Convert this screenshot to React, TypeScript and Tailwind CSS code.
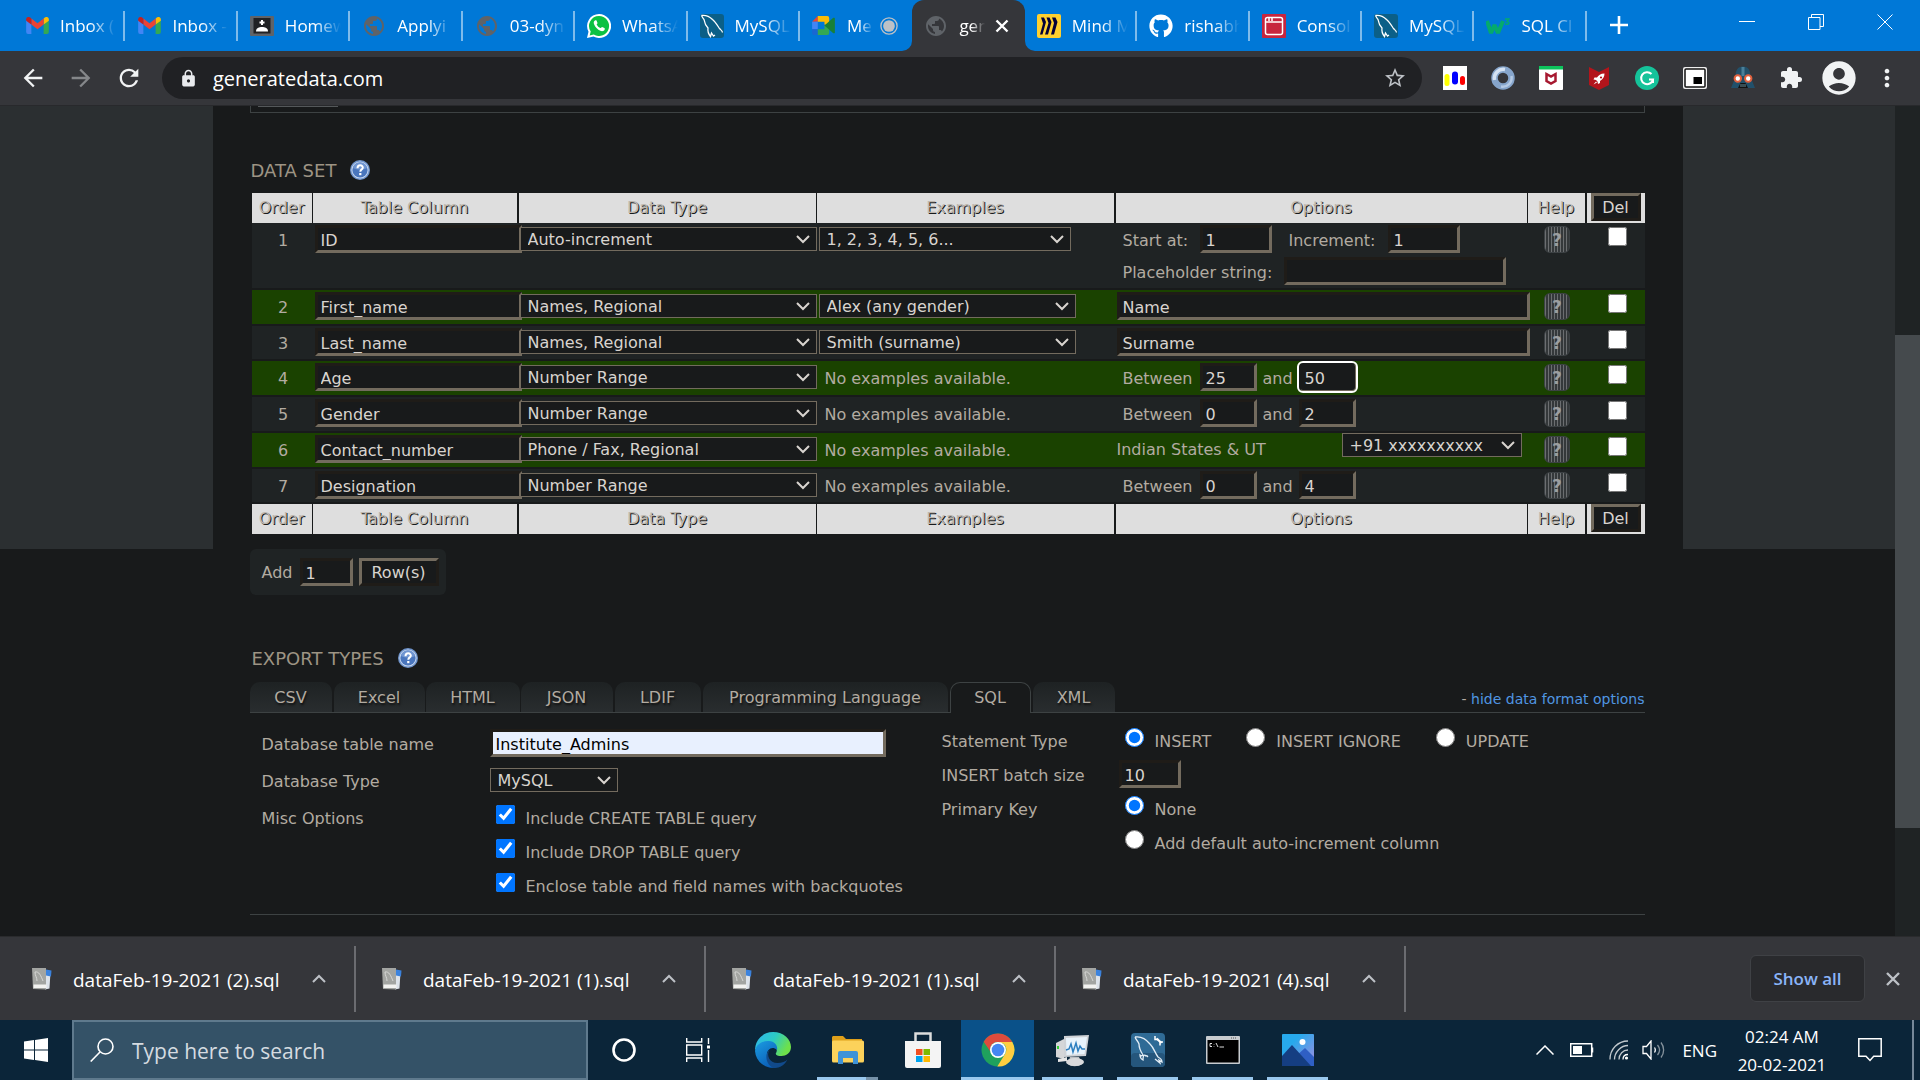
import React from "react";
import {
  MdAccountCircle,
  MdArrowBack,
  MdArrowForward,
  MdExtension,
  MdLock,
  MdMoreVert,
  MdPublic,
  MdRefresh,
  MdStarBorder,
} from "react-icons/md";
import { FaGithub } from "react-icons/fa";

/* ---------- small drawings ---------- */

function Gmail() {
  return (
    <svg viewBox="0 0 24 18" className="h-[17px] w-[23px]">
      <path d="M0 3v13a2 2 0 0 0 2 2h3.500V8z" fill="#4285f4" />
      <path d="M24 3v13a2 2 0 0 1-2 2h-3.500V8z" fill="#34a853" />
      <path d="M18.500 1.800V8L24 4V2.500C24 .2 21.400-.8 19.700.6z" fill="#fbbc04" />
      <path d="M5.500 8V1.500L12 6.500l6.500-5V8L12 13z" fill="#ea4335" />
      <path d="M0 2.500V4l5.500 4V1.800L4.300.6C2.500-.8 0 .2 0 2.500z" fill="#c5221f" />
    </svg>
  );
}

function Classroom() {
  return (
    <svg viewBox="0 0 24 24" className="size-6">
      <rect y="2" width="24" height="20" rx="1" fill="#5f6368" />
      <rect x="3.500" y="4" width="17" height="15.500" fill="#202124" />
      <path d="M12 6v5M9.500 8.500h5" stroke="#fff" strokeWidth="2" />
      <path d="M6 17.500c0-3.500 3-4.500 6-4.500s6 1 6 4.500z" fill="#fff" />
    </svg>
  );
}

function Globe() {
  return <MdPublic className="size-6 text-[#5f6368]" />;
}

function WhatsApp() {
  return (
    <svg viewBox="0 0 24 24" className="size-6">
      <path d="M12 0a12 12 0 1 1-5.500 22.600L0 24l1.500-6.300A12 12 0 0 1 12 0z" fill="#fff" />
      <path d="M12 2a10 10 0 1 1-5.200 18.500L2.700 21.500l1-4A10 10 0 0 1 12 2z" fill="#0cc143" />
      <path
        d="M8.300 6.300c-1.600.6-2 2.600-1 4.500 1.300 2.700 3.300 4.700 6 6 2 .8 3.900.2 4.400-1.300.2-.7.100-1.200-.3-1.400l-2.300-1.200c-.5-.1-1 .9-1.500 1.200-1.700-.5-3.300-2-4-3.800.4-.4 1-.9.9-1.400L9.600 6.700c-.3-.5-.7-.6-1.300-.4z"
        fill="#fff"
      />
    </svg>
  );
}

function Dolphin() {
  return (
    <svg viewBox="0 0 24 24" className="size-6">
      <rect width="24" height="24" rx="3" fill="#0b5f87" />
      <path
        d="M1.500 1.500c4-.5 8 1 11 4 3 2.500 5 6 7 9 1.500 1.500 3 2.500 3 4M1.500 1.500c1 2 1.500 3 2.500 4 .5 3 1.500 6 4 8.500-.5 3 .5 6 2.500 8.500l1-3.500 2 3 1.500-1"
        fill="none"
        stroke="#fff"
        strokeWidth="1.300"
      />
    </svg>
  );
}

function Meet() {
  return (
    <svg viewBox="0 0 24 20" className="h-[19px] w-[23px]">
      <path d="M6 0v6H0z" fill="#ea4335" />
      <path d="M0 6h6v8H0z" fill="#4285f4" />
      <path d="M0 14h6v6H2a2 2 0 0 1-2-2z" fill="#1967d2" />
      <path d="M6 0h10a2 2 0 0 1 2 2v8l-5-1V6H6z" fill="#fbbc04" />
      <path d="M6 20h10a2 2 0 0 0 2-2v-8h-5v4H6z" fill="#34a853" />
      <path d="M13 10l9-8c.8-.6 2-.2 2 1v14c0 1.200-1.200 1.600-2 1z" fill="#188038" />
    </svg>
  );
}

function Miro() {
  return (
    <svg viewBox="0 0 24 24" className="size-6">
      <rect width="24" height="24" rx="2" fill="#ffd02f" />
      <path d="M4 3.500h3l2 4.500-3.500 12.500H3L6 9.500zM9.500 3.500h3l2 4.500L11 20.500H8l3.500-11.500zM15 3.500h3.500L20.500 8 17 20.500h-3L17 9z" fill="#050038" />
    </svg>
  );
}

function ConsoleIcon() {
  return (
    <svg viewBox="0 0 24 24" className="size-6">
      <rect width="24" height="24" rx="1" fill="#c7253e" />
      <rect x="3.500" y="3.500" width="17" height="17" rx="2" fill="none" stroke="#fff" strokeWidth="1.500" />
      <path d="M4 8h16M7 4v3M10 4v3" stroke="#fff" strokeWidth="1.500" />
    </svg>
  );
}

function W3() {
  return (
    <svg viewBox="0 0 24 24" className="size-6">
      <path d="M1 7l4 12 3.500-8 3.500 8 5-12" fill="none" stroke="#04aa6d" strokeWidth="4" strokeLinejoin="bevel" />
      <path d="M19 5h4l-2 2.500c3 0 2.500 4-1.800 2.500" fill="none" stroke="#04aa6d" strokeWidth="1.400" />
    </svg>
  );
}

function HelpBall() {
  return (
    <svg viewBox="0 0 20 20" className="size-5" aria-hidden="true">
      <circle cx="10" cy="10" r="10" fill="#6f94cc" />
      <circle cx="10" cy="10" r="8.600" fill="#c9d8ee" />
      <circle cx="10" cy="10" r="7.600" fill="#4a76bd" />
      <path d="M3 8a7.200 7.200 0 0 1 14 0c-4 2-9 2-14 0z" fill="#7096d2" />
      <path d="M7.500 8.200c0-3.800 5.500-3.600 5.300-.5-.1 1.700-2.500 1.800-2.500 4" fill="none" stroke="#fff" strokeWidth="2" />
      <rect x="9.200" y="13" width="2.200" height="2.200" fill="#fff" />
    </svg>
  );
}

function Chevron({ className }: { className: string }) {
  return (
    <svg viewBox="0 0 14 9" className={className} aria-hidden="true">
      <path d="M1 1l6 6 6-6" fill="none" stroke="currentColor" strokeWidth="2" />
    </svg>
  );
}

/* ---------- browser chrome ---------- */

const tabs = [
  { title: "Inbox (", icon: <Gmail /> },
  { title: "Inbox -", icon: <Gmail /> },
  { title: "Homew", icon: <Classroom /> },
  { title: "Applyi", icon: <Globe /> },
  { title: "03-dyn", icon: <Globe /> },
  { title: "WhatsA", icon: <WhatsApp /> },
  { title: "MySQL", icon: <Dolphin /> },
  { title: "Me", icon: <Meet />, recording: true },
  { title: "gen", icon: <Globe />, active: true },
  { title: "Mind M", icon: <Miro /> },
  { title: "rishabh", icon: <FaGithub className="size-6 text-white" /> },
  { title: "Consol", icon: <ConsoleIcon /> },
  { title: "MySQL", icon: <Dolphin /> },
  { title: "SQL Cl", icon: <W3 /> },
];

function TabStrip() {
  return (
    <header className="grid h-[51px] shrink-0 grid-cols-[1587fr_333fr] bg-[#0078d7] text-white">
      <div className="flex min-w-0 pl-[13px]" role="tablist">
        {tabs.map((t, i) => (
          <div
            key={i}
            role="tab"
            aria-selected={!!t.active}
            className={
              t.active
                ? "relative flex min-w-0 flex-1 items-center rounded-t-xl bg-[#35363a] pl-3"
                : "flex min-w-0 flex-1 items-center pl-3"
            }
          >
            {t.active && (
              <svg viewBox="0 0 10 10" className="absolute bottom-0 -left-[10px] size-[10px]">
                <path d="M10 0v10H0A10 10 0 0 0 10 0z" fill="#35363a" />
              </svg>
            )}
            <span className="flex w-6 shrink-0 justify-center">{t.icon}</span>
            <span
              className={
                t.active || t.recording
                  ? "ml-[11px] min-w-0 flex-1 text-[17px] leading-6 whitespace-nowrap [mask-image:linear-gradient(to_right,black_12px,transparent_26px)]"
                  : "ml-[11px] min-w-0 flex-1 text-[17px] leading-6 whitespace-nowrap [mask-image:linear-gradient(to_right,black_30px,transparent_56px)]"
              }
            >
              {t.title}
            </span>
            {t.recording && (
              <svg viewBox="0 0 20 20" className="mr-[14px] ml-1 size-[18px] shrink-0">
                <circle cx="10" cy="10" r="9" fill="none" stroke="#bdc1c6" strokeWidth="1.500" />
                <circle cx="10" cy="10" r="6.500" fill="#bdc1c6" />
              </svg>
            )}
            {t.active && (
              <button aria-label="Close tab" className="mr-4 ml-1 shrink-0">
                <svg viewBox="0 0 14 14" className="size-[14px]">
                  <path d="M1.500 1.500l11 11M12.500 1.500l-11 11" stroke="#fff" strokeWidth="2.400" />
                </svg>
              </button>
            )}
            {t.active && (
              <svg viewBox="0 0 10 10" className="absolute -right-[10px] bottom-0 size-[10px]">
                <path d="M0 0v10h10A10 10 0 0 1 0 0z" fill="#35363a" />
              </svg>
            )}
            {!t.active && !t.recording && <span className="h-[30px] w-[2px] shrink-0 bg-[#7fbbeb]" />}
          </div>
        ))}
      </div>
      <div className="flex items-start justify-between pr-[27px] pl-[23px]">
        <button aria-label="New tab" className="mt-4">
          <svg viewBox="0 0 18 18" className="size-[18px]">
            <path d="M9 0v18M0 9h18" stroke="#fff" strokeWidth="2.600" />
          </svg>
        </button>
        <div className="mt-[14px] flex gap-[53px]">
          <button aria-label="Minimize">
            <svg viewBox="0 0 16 16" className="size-4">
              <path d="M0 7.500h16" stroke="#fff" />
            </svg>
          </button>
          <button aria-label="Restore">
            <svg viewBox="0 0 16 16" className="size-4" fill="none" stroke="#fff">
              <path d="M.5 3.500h11.500v12H.5zM3.500 3.500v-3h12v12H12" />
            </svg>
          </button>
          <button aria-label="Close">
            <svg viewBox="0 0 16 16" className="size-4">
              <path d="M.5.5l15 15M15.500.5l-15 15" stroke="#fff" />
            </svg>
          </button>
        </div>
      </div>
    </header>
  );
}

function Extensions() {
  return (
    <div className="flex items-center gap-6">
      <svg viewBox="0 0 24 24" className="size-6">
        <rect width="24" height="24" fill="#fff" />
        <path d="M4 10.500v7" stroke="#ff0" strokeWidth="5" strokeLinecap="round" />
        <path d="M12 8.500v7" stroke="#00f" strokeWidth="6" strokeLinecap="round" />
        <path d="M19.500 12.500v4" stroke="#f00" strokeWidth="5" strokeLinecap="round" />
      </svg>
      <svg viewBox="0 0 24 24" className="size-6">
        <circle cx="12" cy="12" r="8.500" fill="none" stroke="#86a5cb" strokeWidth="6.500" />
        <path d="M3.500 14A9 9 0 0 1 14 3.500" fill="none" stroke="#d5e2f2" strokeWidth="3.500" />
        <path d="M20.500 10A9 9 0 0 1 10 20.500" fill="none" stroke="#b5cae4" strokeWidth="2.500" />
      </svg>
      <svg viewBox="0 0 24 24" className="size-6">
        <rect width="24" height="24" rx="1" fill="#fff" />
        <rect width="24" height="3.500" fill="#0cc45c" />
        <path d="M7.500 8l4.500 2.500L16.500 8v7L12 17.500 7.500 15z" fill="none" stroke="#a71930" strokeWidth="2.500" />
      </svg>
      <svg viewBox="0 0 24 24" className="size-6">
        <path d="M2 1l10 5 10-5v18l-10 5-10-5z" fill="#b3141b" />
        <path d="M17.500 7.500c-4 0-6 2-7.500 4H7.500l-1 2 2.500.5 1.500 1.500.5 2.500 2-1V15c3-1.500 4.500-4.500 4.500-7.500zM9 15.500L6.500 18.500 10 16.500z" fill="#fff" />
        <circle cx="14" cy="11.500" r="1.100" fill="#b3141b" />
      </svg>
      <svg viewBox="0 0 24 24" className="size-6">
        <circle cx="12" cy="12" r="12" fill="#15c39a" />
        <path d="M16.500 8a6 6 0 1 0 1.500 5.500h-4M18 13.500V17" fill="none" stroke="#fff" strokeWidth="2" />
      </svg>
      <svg viewBox="0 0 24 24" className="size-6">
        <rect x="0" y="1" width="24" height="22" rx="2" fill="#eee" />
        <rect x="2" y="3" width="20" height="18" rx="1" fill="#fff" stroke="#111" strokeWidth="1.500" />
        <rect x="10.500" y="11" width="8.500" height="7" fill="#000" />
      </svg>
      <svg viewBox="0 0 24 24" className="size-6">
        <path d="M12 0.500c5.500 0 7.500 4 7.500 10.500L24 22H0l4.500-11C4.500 4.500 6.500.5 12 .5z" fill="#22506a" />
        <path d="M12 1v9" stroke="#4a7f98" strokeWidth="3" />
        <circle cx="6.800" cy="12.500" r="3.200" fill="#fff" stroke="#e2603c" strokeWidth="2" />
        <circle cx="17.200" cy="12.500" r="3.200" fill="#fff" stroke="#e2603c" strokeWidth="2" />
        <path d="M7 22l2.500-5h5l2.500 5z" fill="#111" />
        <path d="M10 18v3M12 18v3M14 18v3" stroke="#7ab" strokeWidth=".8" />
      </svg>
      <MdExtension className="size-6 text-[#f1f3f4]" />
    </div>
  );
}

function Toolbar() {
  return (
    <nav className="flex h-[55px] shrink-0 items-center border-b border-[#28292c] bg-[#35363a] pr-[19px] pl-[19px] text-[#f1f3f4]">
      <button aria-label="Back">
        <MdArrowBack className="size-7" />
      </button>
      <button aria-label="Forward" className="ml-5 text-[#85878a]">
        <MdArrowForward className="size-7" />
      </button>
      <button aria-label="Reload" className="ml-5">
        <MdRefresh className="size-7" />
      </button>
      <div className="ml-[19px] flex h-[42px] flex-1 items-center rounded-full bg-[#202124] pr-[15px] pl-[17px]">
        <MdLock className="size-[19px] text-[#e8eaed]" />
        <input
          aria-label="Address"
          defaultValue="generatedata.com"
          className="ml-[15px] min-w-0 flex-1 bg-transparent pt-[2px] text-[20px] text-white outline-none"
        />
        <MdStarBorder className="size-6 text-[#bdc1c6]" />
      </div>
      <div className="ml-[21px] flex items-center">
        <Extensions />
        <button aria-label="Profile" className="ml-4">
          <MdAccountCircle className="size-10" />
        </button>
        <button aria-label="Menu" className="ml-[14px]">
          <MdMoreVert className="size-7" />
        </button>
      </div>
    </nav>
  );
}

/* ---------- form controls ---------- */

const sunken =
  "h-7 rounded-none border-[3px] border-t-[#1f1c18] border-r-[#736b5e] border-b-[#736b5e] border-l-[#1f1c18] bg-[#181a1b] pt-[2px] pl-[3px] leading-5 text-[#d8d4cf] outline-none";

function Field({ value, label, width }: { value: string; label: string; width: string }) {
  return <input aria-label={label} defaultValue={value} className={`${sunken} shrink-0 ${width}`} />;
}

function Picker({ value, label, width }: { value: string; label: string; width: string }) {
  return (
    <span className={`relative block h-6 shrink-0 ${width}`}>
      <select
        aria-label={label}
        className="block h-6 w-full appearance-none rounded-none border border-[#736b5e] bg-[#181a1b] pt-[2px] pl-[7px] leading-5 text-[#d8d4cf]"
      >
        <option>{value}</option>
      </select>
      <Chevron className="pointer-events-none absolute top-2 right-[7px] h-[9px] w-[14px] text-[#d8d4cf]" />
    </span>
  );
}

const raised =
  "h-7 border-[3px] border-t-[#736b5e] border-r-[#1f1c18] border-b-[#1f1c18] border-l-[#736b5e] bg-[#181a1b] leading-6 text-[#d8d4cf]";

/* ---------- data set table ---------- */

function Range({ from, to, focused }: { from: string; to: string; focused?: boolean }) {
  return (
    <div className="flex pl-[7px] leading-[31px]">
      <span className="w-[77px]">Between</span>
      <Field label="From" value={from} width="w-[57px]" />
      <span className="w-[42px] pl-[6px]">and</span>
      {focused ? (
        <input
          aria-label="To"
          defaultValue={to}
          className="h-7 w-[57px] rounded-sm border border-[#181a1b] border-r-[#736b5e] border-b-[#736b5e] bg-[#181a1b] pt-[2px] pl-[5px] leading-6 text-[#d8d4cf] outline-2 outline-white"
        />
      ) : (
        <Field label="To" value={to} width="w-[57px]" />
      )}
    </div>
  );
}

const rows = [
  {
    name: "ID",
    type: "Auto-increment",
    example: "1, 2, 3, 4, 5, 6...",
    exampleWidth: "w-[252px]",
    options: (
      <div className="pl-[7px] leading-[31px]">
        <div className="flex h-8">
          <span className="w-[77px]">Start at:</span>
          <Field label="Start at" value="1" width="w-[72px]" />
          <span className="w-[116px] pl-[17px]">Increment:</span>
          <Field label="Increment" value="1" width="w-[72px]" />
        </div>
        <div className="flex">
          <span className="w-[161px]">Placeholder string:</span>
          <Field label="Placeholder string" value="" width="w-[222px]" />
        </div>
      </div>
    ),
  },
  {
    name: "First_name",
    type: "Names, Regional",
    example: "Alex (any gender)",
    exampleWidth: "w-[257px]",
    options: <div className="flex pl-px"><Field label="Options" value="Name" width="w-[413px]" /></div>,
  },
  {
    name: "Last_name",
    type: "Names, Regional",
    example: "Smith (surname)",
    exampleWidth: "w-[257px]",
    options: <div className="flex pl-px"><Field label="Options" value="Surname" width="w-[413px]" /></div>,
  },
  { name: "Age", type: "Number Range", options: <Range from="25" to="50" focused /> },
  { name: "Gender", type: "Number Range", options: <Range from="0" to="2" /> },
  {
    name: "Contact_number",
    type: "Phone / Fax, Regional",
    options: (
      <div className="flex justify-between pr-[6px] pl-px">
        <span className="leading-[34px]">Indian States &amp; UT</span>
        <Picker label="Phone format" value="+91 xxxxxxxxxx" width="w-[180px]" />
      </div>
    ),
  },
  { name: "Designation", type: "Number Range", options: <Range from="0" to="4" /> },
];

function HeadCells() {
  const th =
    "border-r border-[#181a1b] bg-[#dedede] p-0 font-normal text-[#bdb7af] [text-shadow:1px_1px_0_#181a1b]";
  return (
    <tr className="h-[30px]">
      <th className={th}>Order</th>
      <th className={`${th} border-r-2`}>Table Column</th>
      <th className={th}>Data Type</th>
      <th className={`${th} border-r-2`}>Examples</th>
      <th className={th}>Options</th>
      <th className={`${th} border-r-2`}>Help</th>
      <th className="bg-[#dedede] p-0 align-top font-normal">
        <button className={`${raised} block ml-1 w-[50px]`}>Del</button>
      </th>
    </tr>
  );
}

function DataTable() {
  return (
    <table className="mt-[10px] ml-[2px] w-[calc(100%-2px)] table-fixed border-separate border-spacing-0">
      <colgroup>
        <col className="w-[61px]" />
        <col className="w-[206px]" />
        <col className="w-[298px]" />
        <col className="w-[299px]" />
        <col />
        <col className="w-[59px]" />
        <col className="w-[58px]" />
      </colgroup>
      <thead>
        <HeadCells />
      </thead>
      <tbody>
        {rows.map((r, i) => {
          const td = "border-b-2 border-[#181a1b] p-0 align-top";
          const tint = i % 2 ? "bg-[#1a4200]" : "bg-[#1f2324]";
          const height = i === 0 ? "h-[67px]" : i === 2 || i === 6 ? "h-[35px]" : "h-9";
          return (
            <tr key={r.name} className={`${tint} ${height}`}>
              <td className={`${td} pt-[2px] pl-[2px] text-center leading-[31px]`}>{i + 1}</td>
              <td className={`${td} pt-[2px]`}>
                <div className="flex pl-[2px]">
                  <Field label="Table column" value={r.name} width="w-[207px]" />
                </div>
              </td>
              <td className={`${td} pt-1`}>
                <div className="pl-px">
                  <Picker label="Data type" value={r.type} width="w-[297px]" />
                </div>
              </td>
              <td className={`${td} pt-1`}>
                {r.example ? (
                  <div className="pl-[2px]">
                    <Picker label="Example" value={r.example} width={r.exampleWidth!} />
                  </div>
                ) : (
                  <div className="pl-2 leading-[27px]">No examples available.</div>
                )}
              </td>
              <td className={i === 5 ? td : `${td} pt-[2px]`}>{r.options}</td>
              <td className={`${td} pt-[3px]`}>
                <button
                  aria-label="Help"
                  className="ml-4 block h-[27px] w-[26px] rounded-md border border-[#3c4144] bg-[repeating-linear-gradient(90deg,#6b6e70_0_1px,#34383a_1px_3px)] pl-px text-[17px] leading-6 font-bold text-[#9b9ea0]"
                >
                  ?
                </button>
              </td>
              <td className={`${td} pt-1`}>
                <input type="checkbox" aria-label="Delete row" className="ml-[21px] block size-[19px] accent-[#0075ff]" />
              </td>
            </tr>
          );
        })}
      </tbody>
      <tfoot>
        <HeadCells />
      </tfoot>
    </table>
  );
}

/* ---------- export options ---------- */

const exportTabs = [
  ["CSV", "w-[82px] mr-[2px]"],
  ["Excel", "w-[91px] mr-px"],
  ["HTML", "w-[94px] mr-px"],
  ["JSON", "w-[92px] mr-[2px]"],
  ["LDIF", "w-[86px] mr-[2px]"],
  ["Programming Language", "w-[245px] mr-[2px]"],
  ["SQL", "w-[81px] mr-[2px]"],
  ["XML", "w-[82px]"],
];

function Tick({ children }: { children: React.ReactNode }) {
  return (
    <label className="flex h-[34px] leading-9">
      <input type="checkbox" defaultChecked className="mt-1 mr-[11px] ml-[6px] size-[19px] accent-[#0075ff]" />
      {children}
    </label>
  );
}

function Radio({ name, checked, children }: { name: string; checked?: boolean; children: React.ReactNode }) {
  return (
    <label className="flex h-[34px] leading-9">
      <input type="radio" name={name} defaultChecked={checked} className="mt-1 mr-[11px] size-[19px] accent-[#0075ff]" />
      {children}
    </label>
  );
}

function ExportOptions() {
  return (
    <section className="border-b border-[#3d4243] pb-[11px]">
      <div className="flex items-end border-b border-[#3d4243]">
        {exportTabs.map(([name, size]) => (
          <button
            key={name}
            className={
              name === "SQL"
                ? `${size} -mb-px h-[31px] rounded-t-[10px] border border-b-0 border-[#3d4243] bg-[#181a1b]`
                : `${size} h-[30px] rounded-t-[10px] bg-gradient-to-b from-[#1e2223] to-[#292d2f] pt-[2px] [text-shadow:1px_2px_2px_#111]`
            }
          >
            {name}
          </button>
        ))}
        <div className="ml-auto self-center pt-1 text-[14px]">
          -{" "}
          <a href="#options" className="text-[#5096e2]">
            hide data format options
          </a>
        </div>
      </div>
      <div className="flex pt-[11px] pl-3">
        <div className="w-[680px] pt-[5px]">
          <div className="flex h-[37px] leading-8">
            <label htmlFor="table-name" className="w-[228px]">
              Database table name
            </label>
            <input
              id="table-name"
              defaultValue="Institute_Admins"
              className="h-7 w-[396px] border-[3px] border-t-[#1f1c18] border-r-[#736b5e] border-b-[#736b5e] border-l-[#1f1c18] bg-[#e8f0fe] pt-[2px] pl-[3px] leading-5 text-black"
            />
          </div>
          <div className="flex h-[35px] leading-8">
            <span className="w-[228px]">Database Type</span>
            <div className="pt-[2px]">
              <Picker label="Database type" value="MySQL" width="w-[128px]" />
            </div>
          </div>
          <div className="flex leading-9">
            <span className="w-[228px]">Misc Options</span>
            <div>
              <Tick>Include CREATE TABLE query</Tick>
              <Tick>Include DROP TABLE query</Tick>
              <Tick>Enclose table and field names with backquotes</Tick>
            </div>
          </div>
        </div>
        <div className="leading-9">
          <div className="flex h-[34px]">
            <span className="w-[183px]">Statement Type</span>
            <div className="flex gap-[35px]">
              <Radio name="statement" checked>INSERT</Radio>
              <Radio name="statement">INSERT IGNORE</Radio>
              <Radio name="statement">UPDATE</Radio>
            </div>
          </div>
          <div className="flex h-[34px]">
            <span className="w-[177px]">INSERT batch size</span>
            <div className="flex pt-[2px]">
              <Field label="INSERT batch size" value="10" width="w-[62px]" />
            </div>
          </div>
          <div className="flex">
            <span className="w-[183px]">Primary Key</span>
            <div>
              <Radio name="key" checked>None</Radio>
              <Radio name="key">Add default auto-increment column</Radio>
            </div>
          </div>
        </div>
      </div>
    </section>
  );
}

function Page() {
  return (
    <main className="flex min-h-0 flex-1 overflow-hidden bg-[#181a1b] font-['DejaVu_Sans',Verdana,sans-serif] text-[16px] text-[#b2aba1]">
      <div className="h-[443px] flex-1 bg-[#2b2f31]" />
      <div className="w-full max-w-[1470px] pr-[38px] pl-[37px]">
        <div className="h-[7px] border border-t-0 border-[#3d4243] pl-[7px]">
          <div className="h-px w-20 bg-[#54585a]" />
        </div>
        <h2 className="mt-11 flex h-[26px] items-center gap-[14px] pl-px text-[18px] text-[#9d9484]">
          DATA SET <HelpBall />
        </h2>
        <DataTable />
        <div className="mt-[15px] flex h-[46px] w-[196px] items-center rounded-md bg-[#1f2324] pl-3">
          <label htmlFor="add-rows" className="w-[38px] pt-px">
            Add
          </label>
          <input id="add-rows" defaultValue="1" className={`${sunken} w-[53px]`} />
          <button className={`${raised} ml-[6px] w-20`}>Row(s)</button>
        </div>
        <h2 className="mt-[50px] mb-[11px] flex h-[26px] items-center gap-[14px] pl-[2px] text-[18px] text-[#9d9484]">
          EXPORT TYPES <HelpBall />
        </h2>
        <ExportOptions />
      </div>
      <div className="h-[443px] flex-1 bg-[#2b2f31]" />
      <div className="w-[25px] shrink-0 bg-[#1f2324] pt-[229px]">
        <div className="h-[493px] bg-[#454a4d]" />
      </div>
    </main>
  );
}

/* ---------- downloads and taskbar ---------- */

function SqlFile() {
  return (
    <svg viewBox="0 0 20 24" className="h-6 w-5">
      <path d="M13 4l5.500 1-1 16.500-4.500 1z" fill="#dde3ea" />
      <path d="M14 2.500l5.500 1-.5 6-5-1z" fill="#3b82dd" />
      <path d="M0 1h14v21.500L1 22z" fill="#a3a5a2" />
      <path d="M3 5c4-1 6 4 8 9M3 5c0 4 2 5 2 9" fill="none" stroke="#d7d8d6" />
      <path d="M1.500 17.500h13v3.500h-13z" fill="#f2f2f0" />
    </svg>
  );
}

const downloads = ["(2)", "(1)", "(1)", "(4)"];

function DownloadBar() {
  return (
    <section className="flex h-[84px] shrink-0 items-center border-t border-[#2a2b2d] bg-[#35363a] pl-[6px]">
      {downloads.map((n, i) => (
        <div key={i} className="flex h-[66px] w-[350px] items-center border-r-2 border-[#6b6c70] pl-[26px]">
          <SqlFile />
          <span className="ml-[21px] flex-1 pt-[3px] text-[19px] whitespace-nowrap text-white">dataFeb-19-2021 {n}.sql</span>
          <button aria-label="Download options" className="mr-7 ml-3">
            <Chevron className="h-[9px] w-[14px] rotate-180 text-[#bdc1c6]" />
          </button>
        </div>
      ))}
      <button className="ml-auto h-[47px] w-[115px] rounded-md border border-[#3f4145] bg-[#292a2d] text-[17px] font-semibold text-[#8ab4f8]">
        Show all
      </button>
      <button aria-label="Close downloads" className="mr-5 ml-[21px]">
        <svg viewBox="0 0 14 14" className="size-[14px]">
          <path d="M1 1l12 12M13 1L1 13" stroke="#bdc1c6" strokeWidth="2.400" />
        </svg>
      </button>
    </section>
  );
}

function Edge() {
  return (
    <svg viewBox="0 0 36 36" className="size-9">
      <defs>
        <linearGradient id="edge-a" x1="0" y1="0" x2="1" y2=".4">
          <stop offset="0" stopColor="#2fb4ef" />
          <stop offset=".55" stopColor="#2ccbc4" />
          <stop offset="1" stopColor="#6ee04a" />
        </linearGradient>
        <linearGradient id="edge-b" x1="0" y1="0" x2=".6" y2="1">
          <stop offset="0" stopColor="#1b9de2" />
          <stop offset="1" stopColor="#0b5fb8" />
        </linearGradient>
      </defs>
      <path d="M0 18A18 18 0 0 1 18 0c11 0 18 7.500 18 15 0 6-5 9-9.500 9-4 0-6.500-1.500-5.500-3 1.500-2 1.500-9-6-9-6 0-12 2-15 6z" fill="url(#edge-a)" />
      <path d="M0 19C1 12 8 8.500 14 9c6 .5 9 4.500 8 9-5-5-11 0-10 6 .8 5 5 9.500 10 11.300A18 18 0 0 1 0 19z" fill="url(#edge-b)" />
      <path d="M14.500 18c-3.500 5 0 13 8 13 4.500 0 8-1.500 10-3.500C30 32.500 25 36 19.500 36 12 34.500 8.500 23 14.500 18z" fill="#114a8b" />
    </svg>
  );
}

function Folder() {
  return (
    <svg viewBox="0 0 32 28" className="h-7 w-8">
      <path d="M0 1.500C0 .7.700 0 1.500 0H11l3 3h16v6H0z" fill="#dfa01a" />
      <rect y="4.500" width="32" height="22" rx="1.500" fill="#fcd25b" />
      <path d="M6 28V17a2 2 0 0 1 2-2h16a2 2 0 0 1 2 2v11h-5v-6H11v6z" fill="#3f93d8" />
    </svg>
  );
}

function Store() {
  return (
    <svg viewBox="0 0 36 36" className="size-9">
      <path d="M10.500 12V1.500h15V12" fill="none" stroke="#ddd" strokeWidth="2.500" />
      <path d="M0 9h36v25a2 2 0 0 1-2 2H2a2 2 0 0 1-2-2z" fill="#f4f4f4" />
      <path d="M11 17h6.500v6H11z" fill="#f25022" />
      <path d="M18.500 17H25v6h-6.500z" fill="#7fba00" />
      <path d="M11 24h6.500v6H11z" fill="#00a4ef" />
      <path d="M18.500 24H25v6h-6.500z" fill="#ffb900" />
    </svg>
  );
}

function Chrome() {
  return (
    <svg viewBox="0 0 34 34" className="size-[34px]">
      <circle cx="17" cy="17" r="16.500" fill="#1fa15d" />
      <path d="M2.700 8.700A16.500 16.500 0 0 1 31.300 9H17a8 8 0 0 0-7.500 5L9 18z" fill="#de4b3d" />
      <path d="M17 9h14.300a16.500 16.500 0 0 1-15 24.500L24 21a8 8 0 0 0-1-10z" fill="#ffcd41" />
      <circle cx="17" cy="17" r="8" fill="#fff" />
      <circle cx="17" cy="17" r="6.300" fill="#4587f3" />
    </svg>
  );
}

function Monitor() {
  return (
    <svg viewBox="0 0 36 34" className="h-[34px] w-9">
      <path d="M1 10l8-4v20l-8-2z" fill="#d5d6d8" />
      <path d="M2 13h2v3H2z" fill="#3c3" />
      <path d="M9 3l25-1-3 21-22 1z" fill="#cfd2d6" />
      <path d="M11 5l21-1-2.500 17-18 1z" fill="#e9f3fb" />
      <path d="M11 17l3-1 2-5 2 8 3-9 2 8 2-5 2 3h3" fill="none" stroke="#2d7fc0" strokeWidth="1.500" />
      <path d="M15 24h9l3 7c-4 3-11 3-14 0z" fill="#b9bcc0" />
      <ellipse cx="20" cy="29" rx="9" ry="4" fill="#d9dadc" />
      <path d="M3 26l9-2v4l-9 1z" fill="#e6e6e6" />
    </svg>
  );
}

function Workbench() {
  return (
    <svg viewBox="0 0 34 34" className="size-[34px]">
      <rect width="34" height="34" rx="4" fill="#2f6b96" />
      <rect y="20" width="34" height="14" rx="4" fill="#25567c" />
      <path
        d="M4 4c6-1 11 2 15 7 4 4 5 9 8 13 2 1 4 3 4 5l-3-2 1 3-5-4M4 4c1 3 3 4 4 7 0 5 2 8 4 11-1 1-2 1-3 0 0 3 1 4 3 5 0-4 1-6 3-4 1-1 1 0 2 1"
        fill="none"
        stroke="#e4eef6"
        strokeWidth="1.300"
      />
      <path d="M25.500 5.500l5 4.500" stroke="#fff" strokeWidth="2.200" />
      <path d="M24 3v3.500h3.500M29 12.500V9h3" fill="none" stroke="#fff" strokeWidth="1.500" />
    </svg>
  );
}

function Cmd() {
  return (
    <svg viewBox="0 0 34 28" className="h-7 w-[34px]">
      <rect width="34" height="28" rx="1" fill="#c8ccd0" />
      <rect x="1.500" y="4" width="31" height="22.500" fill="#000" />
      <path d="M6 7.500H4v3h2M8 8v.5M8 10v.5M10 7l2 4M13.500 11H18" fill="none" stroke="#ddd" />
      <path d="M25 2h6" stroke="#555" strokeDasharray="1 1" />
    </svg>
  );
}

function Photos() {
  return (
    <svg viewBox="0 0 32 32" className="size-8">
      <defs>
        <linearGradient id="photo" x1="0" y1="0" x2="1" y2="1">
          <stop offset=".3" stopColor="#27a9ec" />
          <stop offset="1" stopColor="#a78be0" />
        </linearGradient>
      </defs>
      <rect width="32" height="32" rx="1" fill="url(#photo)" />
      <path d="M14 22l9-8 9 9v9H14z" fill="#2f5fc4" />
      <path d="M0 22l10-11 19 21H0z" fill="#153e82" />
      <circle cx="20.500" cy="8" r="3" fill="#fff" />
    </svg>
  );
}

const apps = [
  {
    name: "Task View",
    icon: (
      <svg viewBox="0 0 24 24" className="size-6" fill="none" stroke="#fff" strokeWidth="1.400">
        <path d="M.7 0v4h15V0M.7 24v-4h15v4M.7 7h15v10H.7zM22.500 0v6M22.500 12v12" />
        <path d="M21 9h3" strokeWidth="3" />
      </svg>
    ),
  },
  { name: "Microsoft Edge", icon: <Edge /> },
  { name: "File Explorer", icon: <Folder />, open: true, stacked: true },
  { name: "Microsoft Store", icon: <Store /> },
  { name: "Google Chrome", icon: <Chrome />, open: true, active: true },
  { name: "Performance Monitor", icon: <Monitor />, open: true },
  { name: "MySQL Workbench", icon: <Workbench />, open: true },
  { name: "Command Prompt", icon: <Cmd />, open: true },
  { name: "Photos", icon: <Photos />, open: true },
];

function Taskbar() {
  return (
    <footer className="flex h-[60px] shrink-0 bg-[#0b2539] text-white">
      <button aria-label="Start" className="flex w-[72px] items-center justify-center">
        <svg viewBox="0 0 24 24" className="size-6" fill="#fff">
          <path d="M0 3.400l10-1.400v9.500H0zM11 1.900L24 0v11.500H11zM0 12.500h10V22L0 20.600zM11 12.500h13V24l-13-1.900z" />
        </svg>
      </button>
      <label className="flex w-[516px] items-center border-2 border-[#5f7a8d] bg-[#345267] pl-4">
        <svg viewBox="0 0 24 24" className="size-6" fill="none" stroke="#fff" strokeWidth="1.600">
          <circle cx="15.500" cy="8.500" r="7.500" />
          <path d="M10 14L.7 23.500" />
        </svg>
        <input
          aria-label="Search"
          placeholder="Type here to search"
          className="ml-[18px] flex-1 bg-transparent pt-1 text-[21px] outline-none placeholder:text-[#d5dbe0]"
        />
      </label>
      <button aria-label="Cortana" className="flex w-[72px] items-center justify-center">
        <svg viewBox="0 0 24 24" className="size-6">
          <circle cx="12" cy="12" r="10.500" fill="none" stroke="#fff" strokeWidth="2.600" />
        </svg>
      </button>
      <div className="flex">
        {apps.map((a) => (
          <button
            key={a.name}
            aria-label={a.name}
            className={
              a.active
                ? "flex w-[75px] flex-col items-center border-x border-[#0b2539] bg-[#0a5189]"
                : "flex w-[75px] flex-col items-center"
            }
          >
            <span className="flex flex-1 items-center pt-[3px]">{a.icon}</span>
            <span className={a.active ? "h-[3px] w-full bg-[#99c8ee]" : a.open ? "flex h-[3px] w-[61px] bg-[#99c8ee]" : "h-[3px]"}>
              {a.stacked && <span className="ml-auto h-[3px] w-3 bg-[#7591a8]" />}
            </span>
          </button>
        ))}
      </div>
      <div className="ml-auto flex items-center">
        <svg viewBox="0 0 18 10" className="w-[18px]" fill="none" stroke="#fff" strokeWidth="1.500">
          <path d="M.5 9.500L9 1l8.500 8.500" />
        </svg>
        <svg viewBox="0 0 24 14" className="ml-4 w-6" fill="none" stroke="#fff" strokeWidth="1.500">
          <path d="M.7.7h21v12.600H.7zM22.500 4.500v5" />
          <path d="M3 3h9v8H3z" fill="#fff" stroke="none" />
        </svg>
        <svg viewBox="0 0 20 20" className="ml-[15px] w-5" fill="none" stroke="#fff" strokeWidth="1.300">
          <path d="M1 19.500C1 9 9 1 19 1M5.500 19.500C5.500 12 12 5.500 19 5.500M10 19.500C10 14 14 10 19 10" opacity=".75" />
          <path d="M14 19.500c0-3 2-5 5-5" />
          <circle cx="17.500" cy="18" r="1.600" fill="#fff" stroke="none" />
        </svg>
        <svg viewBox="0 0 24 20" className="ml-[13px] w-6" fill="none" stroke="#fff" strokeWidth="1.300">
          <path d="M1 6.500h3.500L9 1v18l-4.500-5.500H1zM12.500 7.500c1 1.500 1 3.500 0 5" />
          <path d="M15.500 5c2.500 3 2.500 7 0 10M19 2.500c3.500 4.500 3.500 10.500 0 15" opacity=".5" />
        </svg>
        <span className="ml-4 pt-px text-[17px]">ENG</span>
        <div className="ml-[18px] w-[94px] pt-px text-center text-[17px] leading-7 whitespace-nowrap">
          <div>02:24 AM</div>
          <div>20-02-2021</div>
        </div>
        <svg viewBox="0 0 24 24" className="ml-[29px] w-6" fill="none" stroke="#fff" strokeWidth="1.500">
          <path d="M.8.800h22.400v17.500h-7.500L12 22.500l-4-4.200H.8z" />
        </svg>
        <span className="mr-[6px] ml-[30px] h-[60px] w-[2px] bg-[#76889a]" />
      </div>
    </footer>
  );
}

export default function App() {
  return (
    <div className="flex h-screen flex-col overflow-hidden bg-[#35363a] font-['Open_Sans','Noto_Sans',sans-serif]">
      <TabStrip />
      <Toolbar />
      <Page />
      <DownloadBar />
      <Taskbar />
    </div>
  );
}
